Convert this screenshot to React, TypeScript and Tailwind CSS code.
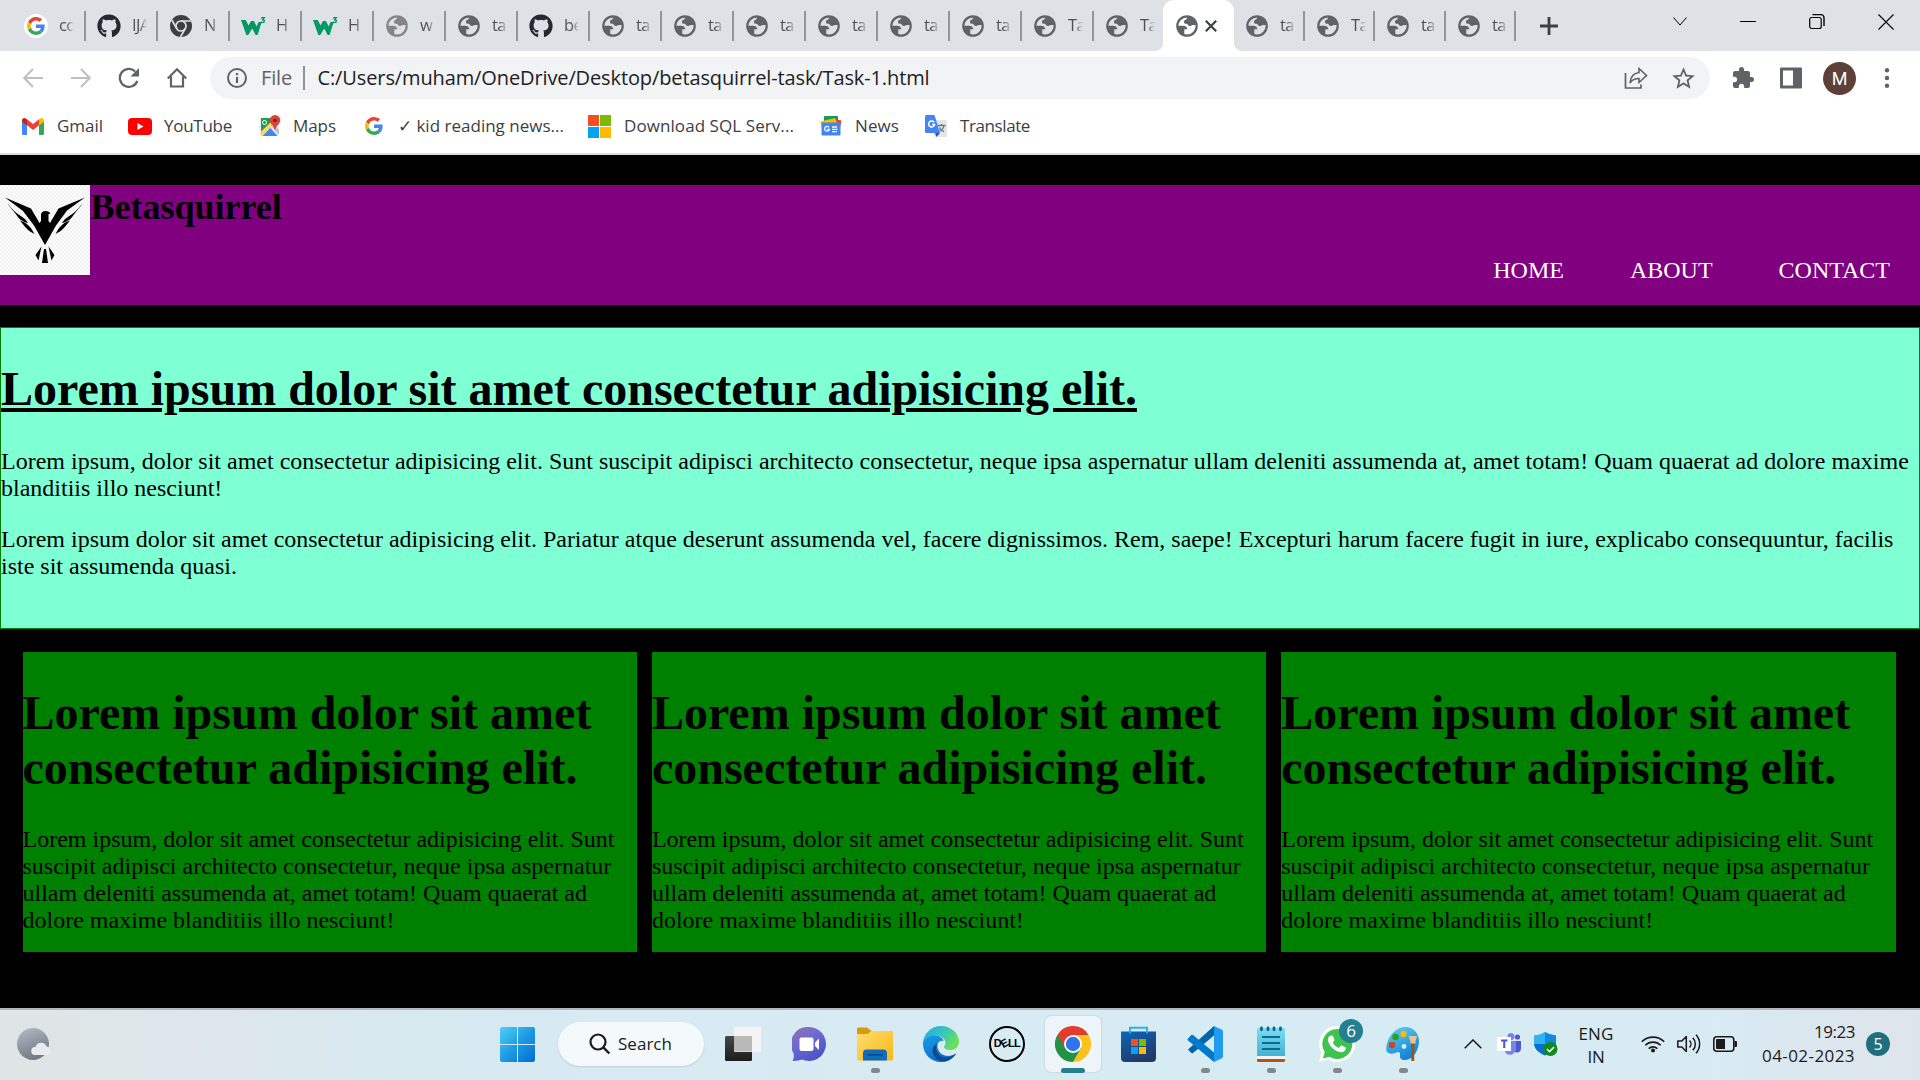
import React, { useLayoutEffect, useRef } from "react";
import { FaGithub } from "react-icons/fa";
import { MdExtension, MdStarBorder } from "react-icons/md";

/* Text whose letter spacing is adjusted so that it fills a given width. */
function Fit({ w, className = "", children }: { w: number; className?: string; children: string }) {
  const ref = useRef<HTMLSpanElement>(null);
  useLayoutEffect(() => {
    const el = ref.current;
    if (!el) return;
    el.style.letterSpacing = "0px";
    const natural = el.getBoundingClientRect().width;
    el.style.letterSpacing = `${(w - natural) / children.length}px`;
  }, [w, children]);
  return (
    <span ref={ref} className={`inline-block whitespace-pre ${className}`}>
      {children}
    </span>
  );
}

const GoogleG = ({ className = "" }) => (
  <svg viewBox="0 0 48 48" className={className}>
    <path fill="#EA4335" d="M24 9.5c3.54 0 6.71 1.22 9.21 3.6l6.85-6.85C35.9 2.38 30.47 0 24 0 14.62 0 6.51 5.38 2.56 13.22l7.98 6.19C12.43 13.72 17.74 9.5 24 9.5z" />
    <path fill="#4285F4" d="M46.98 24.55c0-1.57-.15-3.09-.38-4.55H24v9.02h12.94c-.58 2.96-2.26 5.48-4.78 7.18l7.73 6c4.51-4.18 7.09-10.36 7.09-17.65z" />
    <path fill="#FBBC05" d="M10.53 28.59c-.48-1.45-.76-2.99-.76-4.59s.27-3.14.76-4.59l-7.98-6.19C.92 16.46 0 20.12 0 24c0 3.88.92 7.54 2.56 10.78l7.97-6.19z" />
    <path fill="#34A853" d="M24 48c6.48 0 11.93-2.13 15.89-5.81l-7.73-6c-2.15 1.45-4.92 2.3-8.16 2.3-6.26 0-11.57-4.22-13.47-9.91l-7.98 6.19C6.51 42.62 14.62 48 24 48z" />
  </svg>
);

const Globe = ({ color = "#5f6368" }) => (
  <svg viewBox="0 0 22 22" className="h-[22px] w-[22px]">
    <circle cx="11" cy="11" r="9.7" fill="none" stroke={color} strokeWidth="2.2" />
    <path fill={color} d="M11 1.5c-.3 1.6.4 2-.8 2.8-1.6 1-2.3 1.5-2.3 2.8 0 1.4 1.2 1.7 2.7 1.7 1.3 0 1.4 2.3 3.2 2.3 1.5 0 1.6-1.2 3-1.2h3.7C20.5 5 16 1.2 11 1.5z" />
    <path fill={color} d="M1.5 10.8h5.6c2.7 0 4.1 1.2 4.2 3.5H8.3v5.5C4 19 1.5 15 1.5 10.8z" />
  </svg>
);

const ChromeMono = () => (
  <svg viewBox="0 0 22 22" className="h-[22px] w-[22px]">
    <circle cx="11" cy="11" r="11" fill="#3c4043" />
    <circle cx="11" cy="11" r="5" fill="none" stroke="#dee1e6" strokeWidth="1.700" />
    <path d="M11 6h9.800M6.700 13.500 1.800 5M15.300 13.500 10.500 22" stroke="#dee1e6" strokeWidth="1.600" />
  </svg>
);

const W3 = () => (
  <svg viewBox="0 0 25 20" className="h-[20px] w-[25px]">
    <path fill="#059862" d="M0 4h4.800l2.700 5.500L10 5h3l2.700 5.500L17.500 6h3.200L16.600 19h-2L11.200 12.500 7.300 19H5.300z" />
    <path fill="none" stroke="#059862" strokeWidth="1.4" d="M20.200 1.700h3l-1.500 2c1 0 1.700.5 1.700 1.400s-.7 1.500-1.700 1.500c-.8 0-1.400-.3-1.700-.8" />
  </svg>
);

type TabKind = "google" | "github" | "chrome" | "w3" | "globe" | "globeGray";
const tabs: [TabKind, string][] = [
  ["google", "co"], ["github", "IJA"], ["chrome", "N"], ["w3", "H"], ["w3", "H"], ["globeGray", "w"],
  ["globe", "ta"], ["github", "be"], ["globe", "ta"], ["globe", "ta"], ["globe", "ta"], ["globe", "ta"],
  ["globe", "ta"], ["globe", "ta"], ["globe", "Ta"], ["globe", "Ta"],
];
const tabsRight: [TabKind, string][] = [["globe", "ta"], ["globe", "Ta"], ["globe", "ta"], ["globe", "ta"]];

function TabIcon({ kind }: { kind: TabKind }) {
  if (kind === "google")
    return (
      <span className="flex h-6 w-6 items-center justify-center rounded-full bg-white">
        <GoogleG className="h-[18px] w-[18px]" />
      </span>
    );
  if (kind === "github") return <FaGithub className="h-6 w-6 text-[#24292f]" />;
  if (kind === "chrome") return <ChromeMono />;
  if (kind === "w3") return <W3 />;
  return <Globe color={kind === "globeGray" ? "#858585" : "#5f6368"} />;
}

function Tab({ kind, label, width, last }: { kind: TabKind; label: string; width: string; last?: boolean }) {
  return (
    <div className={`flex h-[30px] shrink-0 items-center ${width} ${last ? "" : "border-r-2 border-[#929599]"}`}>
      <div className="flex w-[46px] shrink-0 items-center justify-center">
        <TabIcon kind={kind} />
      </div>
      <div className="w-[15px] overflow-hidden whitespace-nowrap bg-linear-to-r from-[#4b4e52] from-50% to-[#dee1e6] bg-clip-text pb-px text-[16.5px] tracking-[-0.6px] text-transparent">
        {label}
      </div>
    </div>
  );
}

const Gmail = () => (
  <svg viewBox="0 0 22 17" className="h-[17px] w-[22px]">
    <path fill="#4285f4" d="M0 3v12.500A1.500 1.500 0 0 0 1.500 17H5V6.500z" />
    <path fill="#34a853" d="M22 3v12.500a1.500 1.500 0 0 1-1.500 1.500H17V6.500z" />
    <path fill="#ea4335" d="M5 1.200 11 6l6-4.800v6L11 12 5 7.200z" />
    <path fill="#c5221f" d="M0 2.500C0 .3 2.200-.6 3.900.6L5 1.400v6L0 3.700z" />
    <path fill="#fbbc04" d="M22 2.500C22 .3 19.800-.6 18.100.6L17 1.400v6l5-3.700z" />
  </svg>
);
const YouTube = () => (
  <svg viewBox="0 0 24 17" className="h-[17px] w-[24px]">
    <rect width="24" height="17" rx="4" fill="#f00" />
    <path fill="#fff" d="M9.500 5v7l6-3.500z" />
  </svg>
);
const Maps = () => (
  <svg viewBox="0 0 22 22" className="h-[22px] w-[22px]">
    <rect x="1" y="3" width="19" height="18" rx="1.500" fill="#eceff1" />
    <path fill="#1e9e58" d="M2.500 3H14l-2 6-10 9.500v-14C1.500 3.500 2 3 2.500 3z" />
    <path fill="#fdd663" d="M1.500 17 12 7l3 3-12 11H2z" />
    <path fill="#4285f4" d="m3.500 21 8-8 7 8z" />
    <path fill="#bdc1c6" d="m13 12 2-2 5 5v5z" />
    <circle cx="5.500" cy="7.500" r="2" fill="none" stroke="#fff" strokeWidth="1" />
    <path fill="#db4437" d="M16 0a5.300 5.300 0 0 1 5.300 5.300c0 3.500-4.200 5-5.300 10.200-1.100-5.200-5.300-6.700-5.300-10.200A5.300 5.300 0 0 1 16 0z" />
    <circle cx="16" cy="5.300" r="1.900" fill="#7b231e" />
  </svg>
);
const MsSquares = () => (
  <svg viewBox="0 0 23 23" className="h-[23px] w-[23px]">
    <path fill="#f25022" d="M0 0h11v11H0z" />
    <path fill="#7fba00" d="M12 0h11v11H12z" />
    <path fill="#00a4ef" d="M0 12h11v11H0z" />
    <path fill="#ffb900" d="M12 12h11v11H12z" />
  </svg>
);
const News = () => (
  <svg viewBox="0 0 22 20" className="h-[20px] w-[22px]">
    <rect x="4" y="0" width="14" height="8" rx="1" fill="#0f9d58" />
    <path fill="#ea4335" d="m14 3 7.500 1.500L20 12l-7-1z" />
    <path fill="#fbbc04" d="M.3 5.500 15 2l2 5L2 12z" />
    <rect x="1.500" y="6.500" width="19" height="13" rx="1.200" fill="#4285f4" />
    <path fill="none" stroke="#fff" strokeWidth="1.300" d="M9 11.300a2.400 2.400 0 1 0 .4 2H7.300M12 11h5M12 13.300h5.500M12 15.600h5" />
  </svg>
);
const Translate = () => (
  <svg viewBox="0 0 22 23" className="h-[23px] w-[22px]">
    <rect x="9" y="5" width="13" height="17" rx="1.200" fill="#e3e5e8" />
    <path fill="none" stroke="#607d8b" strokeWidth="1.300" d="M13 10.500h7.500M16.500 9v1.500M19 10.500c-.5 3-2.500 5-4.500 6M14.500 12.500c.5 1.700 2.500 3.500 4.500 4" />
    <path fill="#3949ab" d="M10 18h5l-3.500 4z" />
    <path fill="#4285f4" d="M1.500 0h8l5.500 18H1.500A1.500 1.500 0 0 1 0 16.500v-15A1.500 1.500 0 0 1 1.500 0z" />
    <path fill="none" stroke="#fff" strokeWidth="1.500" d="M9 7.200A3 3 0 1 0 9.600 9.500H7" />
  </svg>
);

const bookmarks: { icon: React.ReactNode; iconW: string; itemW: string; label: string; w: number }[] = [
  { icon: <Gmail />, iconW: "w-[35px]", itemW: "w-[106px]", label: "Gmail", w: 46 },
  { icon: <YouTube />, iconW: "w-[36px]", itemW: "w-[131px]", label: "YouTube", w: 68 },
  { icon: <Maps />, iconW: "w-[34px]", itemW: "w-[106px]", label: "Maps", w: 43 },
  { icon: <GoogleG className="h-[18px] w-[18px]" />, iconW: "w-[33px]", itemW: "w-[223px]", label: "✓ kid reading news...", w: 166 },
  { icon: <MsSquares />, iconW: "w-[36px]", itemW: "w-[232px]", label: "Download SQL Serv...", w: 170 },
  { icon: <News />, iconW: "w-[35px]", itemW: "w-[105px]", label: "News", w: 44 },
  { icon: <Translate />, iconW: "w-[35px]", itemW: "w-[130px]", label: "Translate", w: 70 },
];

function Browser() {
  return (
    <header className="h-[155px] border-b-2 border-[#dadce0] bg-white text-[17px] text-[#3c4043]">
      <div className="flex h-[51px] bg-[#dee1e6] pl-[13px]">
        <div className="flex h-[51px] items-center pt-px">
          {tabs.map(([k, l], i) => (
            <Tab key={i} kind={k} label={l} last={i === tabs.length - 1} width={i === 0 ? "w-[73px]" : i === tabs.length - 1 ? "w-[61px]" : "w-[72px]"} />
          ))}
        </div>
        <div className="flex h-[51px] w-[87px] items-end">
          <div className="h-2 w-2 bg-white">
            <div className="h-2 w-2 rounded-br-lg bg-[#dee1e6]" />
          </div>
          <div className="flex h-[51px] w-[71px] items-center gap-[7px] rounded-t-[11px] bg-white pl-[13px] pt-px">
            <Globe />
            <svg viewBox="0 0 12 12" className="h-3 w-3">
              <path d="M.8.800 11.200 11.200M11.200.800.800 11.200" stroke="#3c4043" strokeWidth="2.200" />
            </svg>
          </div>
          <div className="h-2 w-2 bg-white">
            <div className="h-2 w-2 rounded-bl-lg bg-[#dee1e6]" />
          </div>
        </div>
        <div className="-ml-[8px] flex h-[51px] items-center pt-px">
          {tabsRight.map(([k, l], i) => (
            <Tab key={i} kind={k} label={l} width={i === 0 || i === 2 ? "w-[71px]" : "w-[70px]"} />
          ))}
        </div>
        <svg viewBox="0 0 18 18" className="ml-[24px] mt-[17px] h-[18px] w-[18px]">
          <path d="M9 0v18M0 9h18" stroke="#3c4043" strokeWidth="2.800" />
        </svg>
        <div className="ml-auto mr-[26px] mt-[13px] flex h-[18px] items-center text-black">
          <svg viewBox="0 0 16 18" className="mr-[52px] h-[18px] w-4">
            <path d="m1.500 4.500 6.500 7.500 6.500-7.500" fill="none" stroke="currentColor" strokeWidth="1" />
          </svg>
          <svg viewBox="0 0 16 18" className="mr-[53px] h-[18px] w-4">
            <path d="M0 8.500h16" stroke="currentColor" strokeWidth="1" />
          </svg>
          <svg viewBox="0 0 16 18" className="mr-[53px] h-[18px] w-4">
            <rect x=".7" y="4.500" width="11.500" height="11" rx="2" fill="none" stroke="currentColor" strokeWidth="1.200" />
            <path d="M3.500 1.600h8.500a3 3 0 0 1 3 3v8.500" fill="none" stroke="currentColor" strokeWidth="1.400" />
          </svg>
          <svg viewBox="0 0 16 18" className="h-[18px] w-4">
            <path d="m.5 1.500 15 15M15.500 1.500l-15 15" stroke="currentColor" strokeWidth="1.100" />
          </svg>
        </div>
      </div>

      <div className="flex h-[54px] items-center pl-[23px]">
        <svg viewBox="0 0 20 20" className="h-5 w-5">
          <path d="M20 10H1.500M10 1 1.200 10 10 19" fill="none" stroke="#bdbfc1" strokeWidth="2" />
        </svg>
        <svg viewBox="0 0 20 20" className="ml-[28px] h-5 w-5">
          <path d="M0 10h18.500M10 1l8.800 9L10 19" fill="none" stroke="#bdbfc1" strokeWidth="2" />
        </svg>
        <svg viewBox="0 0 22 22" className="ml-[27px] h-[22px] w-[22px]">
          <path d="M19.300 14A9 9 0 1 1 17.200 4.500" fill="none" stroke="#5f6368" strokeWidth="2.200" />
          <path d="M21 1v8.500h-8.500z" fill="#5f6368" />
        </svg>
        <svg viewBox="0 0 20 20" className="ml-[27px] h-5 w-5">
          <path d="M.7 10.500 10 1.300l9.300 9.200M4 8.500v10h12v-10" fill="none" stroke="#5f6368" strokeWidth="2.200" />
        </svg>
        <div className="ml-[23px] flex h-[42px] w-[1500px] items-center rounded-full bg-[#f1f3f4] pl-[17px] text-[20px]">
          <svg viewBox="0 0 20 20" className="h-5 w-5">
            <circle cx="10" cy="10" r="9" fill="none" stroke="#5f6368" strokeWidth="2" />
            <path d="M10 9v6M10 5v2.200" stroke="#5f6368" strokeWidth="2.200" />
          </svg>
          <Fit w={31} className="ml-[14px] text-[#5f6368]">File</Fit>
          <span className="ml-[11px] mr-[13px] h-6 w-[1.5px] bg-[#8f9296]" />
          <Fit w={612} className="text-[#202124]">C:/Users/muham/OneDrive/Desktop/betasquirrel-task/Task-1.html</Fit>
          <svg viewBox="0 0 24 22" className="ml-auto h-[22px] w-6">
            <path d="M1.500 6v15h15.500v-3.500" fill="none" stroke="#5f6368" strokeWidth="1.700" />
            <path d="M15 5.500V1.500l7.500 7-7.500 7v-4c-4 0-7 1.200-9 4.500.4-5.500 3.500-9.800 9-10.500z" fill="none" stroke="#5f6368" strokeWidth="1.600" />
          </svg>
          <MdStarBorder className="ml-[22px] mr-[13px] h-[27px] w-[27px] text-[#5f6368]" />
        </div>
        <MdExtension className="ml-[21px] h-6 w-6 text-[#5f6368]" />
        <svg viewBox="0 0 22 22" className="ml-[25px] h-[22px] w-[22px]">
          <rect width="22" height="21" y=".5" rx="1" fill="#5f6368" />
          <path fill="#fff" d="M3 3.500h10v15H3z" />
        </svg>
        <span className="ml-[21px] flex h-[33px] w-[33px] items-center justify-center rounded-full bg-[#5d4037] font-[Roboto] text-[18px] text-white">M</span>
        <svg viewBox="0 0 6 22" className="ml-[28px] h-[22px] w-[6px]">
          <circle cx="3" cy="3.200" r="2.200" fill="#5f6368" />
          <circle cx="3" cy="11" r="2.200" fill="#5f6368" />
          <circle cx="3" cy="18.800" r="2.200" fill="#5f6368" />
        </svg>
      </div>

      <div className="flex h-[42px] items-center pl-[22px]">
        {bookmarks.map((b) => (
          <div key={b.label} className={`flex shrink-0 items-center ${b.itemW}`}>
            <span className={`shrink-0 ${b.iconW}`}>{b.icon}</span>
            <Fit w={b.w}>{b.label}</Fit>
          </div>
        ))}
      </div>
    </header>
  );
}

const Eagle = () => (
  <svg viewBox="0 0 90 90" className="h-[90px] w-[90px] shrink-0">
    <defs>
      <pattern id="check" width="4" height="4" patternUnits="userSpaceOnUse">
        <rect width="4" height="4" fill="#fdfdfd" />
        <path fill="#f1f1f1" d="M0 0h2v2H0zM2 2h2v2H2z" />
      </pattern>
    </defs>
    <rect width="90" height="90" fill="url(#check)" />
    <path d="M5 12.500 31 23.500l8.500 14.500 1.500-2V30c0-2.500 2-4 4.500-4 2 0 3.500.7 5 2.500l-2 .5v7l1.500 2L58.500 23.500 85 12.500 67 25.500 56 40.500 45 60 34 40.500 23 26z" />
    <path d="M7.500 18c4 6 9 10.500 14 13.500 3 2 5 4 6.500 6.500-6-1.500-9-4-11.500-8C13 25.500 9.500 22 7.500 18zM82.500 18c-4 6-9 10.500-14 13.500-3 2-5 4-6.500 6.500 6-1.500 9-4 11.500-8 3.500-4.500 7-8 9-12zM20 35.500c5 1.500 10 4.500 14.500 13.500-6-3-9-6-14.500-13.500zM70 35.500c-5 1.500-10 4.500-14.500 13.500 6-3 9-6 14.500-13.500z" />
    <path d="M41.500 61.500 38.500 75.500l-3-5.500zM48.500 61.500l3 14 3-5.500zM44 64h2l2 14h-6z" />
  </svg>
);

const para1 =
  "Lorem ipsum, dolor sit amet consectetur adipisicing elit. Sunt suscipit adipisci architecto consectetur, neque ipsa aspernatur ullam deleniti assumenda at, amet totam! Quam quaerat ad dolore maxime blanditiis illo nesciunt!";
const para2 =
  "Lorem ipsum dolor sit amet consectetur adipisicing elit. Pariatur atque deserunt assumenda vel, facere dignissimos. Rem, saepe! Excepturi harum facere fugit in iure, explicabo consequuntur, facilis iste sit assumenda quasi.";
const heading = "Lorem ipsum dolor sit amet consectetur adipisicing elit.";

function Page() {
  return (
    <main className="h-[853px] overflow-hidden bg-black pt-[30px] font-['Liberation_Serif',serif] text-[24px] leading-[27px] text-black">
      <div className="flex h-[120px] bg-[#800080]">
        <Eagle />
        <h2 className="pl-[0.5px] pt-px text-[36px] font-bold leading-[42px]">Betasquirrel</h2>
        <nav className="ml-auto flex gap-[66px] pr-[30px] pt-[72px] text-white">
          <a>HOME</a>
          <a>ABOUT</a>
          <a>CONTACT</a>
        </nav>
      </div>
      <section className="mt-[22px] h-[302px] border border-[#008000] bg-[#7fffd4] pt-[33px]">
        <h1 className="text-[48px] font-bold leading-[55px] underline">{heading}</h1>
        <p className="mt-[32px]">{para1}</p>
        <p className="mt-[24px]">{para2}</p>
      </section>
      <div className="mt-[23px] flex gap-[15px] pl-[22.5px]">
        {[0, 1, 2].map((i) => (
          <article key={i} className="h-[300px] w-[614.4px] shrink-0 bg-[#008000] pt-[33px]">
            <h1 className="text-[48px] font-bold leading-[55px]">{heading}</h1>
            <p className="mt-[31px]">{para1}</p>
          </article>
        ))}
      </div>
    </main>
  );
}

const Edge = () => (
  <svg viewBox="0 0 36 36" className="h-9 w-9">
    <defs>
      <linearGradient id="e1" x1="0" y1="0" x2="1" y2=".5">
        <stop offset="0" stopColor="#2aa5e6" />
        <stop offset=".55" stopColor="#35c6c0" />
        <stop offset="1" stopColor="#6be05a" />
      </linearGradient>
      <linearGradient id="e2" x1="0" y1="0" x2=".6" y2="1">
        <stop offset="0" stopColor="#1aa0e8" />
        <stop offset="1" stopColor="#0669c8" />
      </linearGradient>
    </defs>
    <path fill="url(#e2)" d="M0 18C0 11 6 8.500 11 9c6 .5 9.500 4 9.500 6-4-1.500-6.500 2-6 6 .6 5 5 9 10.500 9 3 0 5.500-1 8-2.500C30 33 24.500 36 18 36 8 36 0 28 0 18z" />
    <path fill="#114a8b" d="M14.300 17.500c-2 3.500-1 9 2.500 12 4 3.500 10 3 16.500-2.300-2.500 4-6.500 7.300-11.500 8.400-7 .4-12.300-5-12.300-11 0-3 1.800-6 4.800-7.100z" />
    <path fill="url(#e1)" d="M0 17C.5 7.500 8.500 0 18 0s18 7 18 15.500c0 5-3.500 8.500-8.500 8.500-4 0-6.500-1.500-6.500-3 0-1 1.500-1.500 1.500-4 0-3.500-4-7.500-10-7.500C6 9.500 1.500 12.500 0 17z" />
  </svg>
);

const Chrome = () => (
  <svg viewBox="0 0 36 36" className="h-9 w-9">
    <path fill="#fcc21b" d="M18 9h15.600A18 18 0 0 1 18 36l7.800-13.500z" />
    <path fill="#229342" d="M2.400 9a18 18 0 0 0 15.600 27l7.800-13.500L18 18z" />
    <path fill="#e33b2e" d="M33.600 9A18 18 0 0 0 2.400 9l7.800 13.500L18 9z" />
    <circle cx="18" cy="18" r="9" fill="#fff" />
    <circle cx="18" cy="18" r="7.200" fill="#2f74ea" />
  </svg>
);

const VSCode = () => (
  <svg viewBox="0 0 36 36" className="h-9 w-9">
    <path fill="#0065a9" d="m1 23.500 3 3.300c.6.500 1.300.5 2 .1L27 9.500V0z" />
    <path fill="#007acc" d="m1 12.500 3-3.300c.6-.5 1.300-.5 2-.1L27 26.500V36L1 14.500c-.6-.6-.6-1.400 0-2z" />
    <path fill="#1f9cf0" d="m27 0 7.500 3.500c1 .4 1.500 1.200 1.500 2.200v24.600c0 1-.5 1.800-1.500 2.200L27 36z" />
  </svg>
);

const Paint = () => (
  <svg viewBox="0 0 36 36" className="h-9 w-9">
    <defs>
      <linearGradient id="pt" x1="0" y1="0" x2=".5" y2="1">
        <stop offset="0" stopColor="#5fd4f5" />
        <stop offset="1" stopColor="#1583d8" />
      </linearGradient>
    </defs>
    <path fill="url(#pt)" d="M20 1c8 0 14 6 14 14 0 9-6 19-14 19-4 0-5.500-2-5-5 .3-2.500-1-3.500-3.500-2.500C7 28.500 3 28 1.500 25 0 16 8 1 20 1z" />
    <circle cx="10.500" cy="11" r="3.200" fill="#2f9e1a" />
    <circle cx="18.500" cy="8" r="3.200" fill="#fdb90c" />
    <circle cx="7" cy="19" r="3.200" fill="#d0451b" />
    <circle cx="19" cy="20.500" r="2.400" fill="#d9ecf5" />
    <path fill="#9a5a17" d="M26 16h3.500l-.3 19h-2.900z" />
    <path fill="#e8c48e" d="M23.500 10h8.500l-1.500 5.500v2h-5v-2z" />
  </svg>
);

const apps: { name: string; dot?: boolean; icon: React.ReactNode }[] = [
  {
    name: "tasks",
    icon: (
      <svg viewBox="0 0 36 34" className="h-[34px] w-9">
        <defs>
          <linearGradient id="tv" x1="0" y1="0" x2="0" y2="1">
            <stop offset="0" stopColor="#484848" />
            <stop offset="1" stopColor="#1c1c1c" />
          </linearGradient>
        </defs>
        <rect y="9" width="27" height="25" rx="1.500" fill="url(#tv)" />
        <rect x="9" width="27" height="25" rx="1" fill="#f4f4f4" />
        <path fill="#b9b9b9" d="M9 9h18v15.500H9z" />
      </svg>
    ),
  },
  {
    name: "chat",
    icon: (
      <svg viewBox="0 0 34 34" className="h-[34px] w-[34px]">
        <defs>
          <linearGradient id="ch" x1="0" y1="0" x2=".6" y2="1">
            <stop offset="0" stopColor="#9a6bb0" />
            <stop offset=".45" stopColor="#6e6cd0" />
            <stop offset="1" stopColor="#4f52c8" />
          </linearGradient>
        </defs>
        <path fill="url(#ch)" d="M17 0a17 17 0 1 1-7 32.500c-2.500 1-6 1.600-9.500 1.500 1.500-2.500 1.500-5 1-8A17 17 0 0 1 17 0z" />
        <rect x="7.500" y="10.500" width="14" height="13.500" rx="2" fill="#fff" />
        <path fill="#fff" d="M23 15.500 27 11.500v11.500l-4-4z" />
      </svg>
    ),
  },
  {
    name: "files",
    dot: true,
    icon: (
      <svg viewBox="0 0 36 34" className="h-[34px] w-9">
        <defs>
          <linearGradient id="fo" x1="0" y1="0" x2="1" y2="1">
            <stop offset="0" stopColor="#ffdc73" />
            <stop offset="1" stopColor="#f9b912" />
          </linearGradient>
        </defs>
        <path fill="#d99b0a" d="M0 2a1.500 1.500 0 0 1 1.500-1.500H10l4.500 3.500H35v6H0z" />
        <path fill="url(#fo)" d="M0 7h10.500l4-3H34.500A1.500 1.500 0 0 1 36 5.500v27a1 1 0 0 1-1 1H1a1 1 0 0 1-1-1z" />
        <path fill="#0f6cbd" d="M6 33.500V26a3.500 3.500 0 0 1 3.500-3.500h17A3.500 3.500 0 0 1 30 26v7.500z" />
        <path stroke="#0b4a8a" strokeWidth="1.800" strokeLinecap="round" d="M11 27.800h14" />
      </svg>
    ),
  },
  { name: "edge", icon: <Edge /> },
  {
    name: "dell",
    icon: (
      <span className="flex h-9 w-9 items-center justify-center rounded-full border-2 border-black pb-px font-['Liberation_Sans',sans-serif] text-[11px] font-bold tracking-[-0.6px] text-black">
        D<span className="-rotate-[30deg]">E</span>LL
      </span>
    ),
  },
  { name: "chrome", icon: <Chrome /> },
  {
    name: "store",
    icon: (
      <svg viewBox="0 0 35 36" className="mr-px h-9 w-[35px]">
        <defs>
          <linearGradient id="st" x1="0" y1="0" x2=".5" y2="1">
            <stop offset="0" stopColor="#0b66bd" />
            <stop offset="1" stopColor="#233a68" />
          </linearGradient>
        </defs>
        <path d="M9 8V1.800h17V8" fill="none" stroke="#27b3f2" strokeWidth="2" />
        <path fill="url(#st)" d="M0 5.500h35V32a4 4 0 0 1-4 4H4a4 4 0 0 1-4-4z" />
        <path d="M9 5v2.300M26 5v2.300" stroke="#27b3f2" strokeWidth="2" />
        <path fill="#f25022" d="M10 13h7v7h-7z" />
        <path fill="#7fba00" d="M18 13h7v7h-7z" />
        <path fill="#00a4ef" d="M10 21h7v7h-7z" />
        <path fill="#ffb900" d="M18 21h7v7h-7z" />
      </svg>
    ),
  },
  { name: "code", dot: true, icon: <VSCode /> },
  {
    name: "notepad",
    dot: true,
    icon: (
      <svg viewBox="0 0 28 36" className="h-9 w-7">
        <defs>
          <linearGradient id="np" x1="0" y1="0" x2="0" y2="1">
            <stop offset="0" stopColor="#7fdcf0" />
            <stop offset="1" stopColor="#41b2d3" />
          </linearGradient>
        </defs>
        <path fill="#b4530b" d="M0 30h28v4.500a1.500 1.500 0 0 1-1.500 1.500h-25A1.500 1.500 0 0 1 0 34.500z" />
        <path fill="#f3f3f3" d="M0 28h28v5H0z" />
        <path fill="url(#np)" d="M1.500 2h25A1.500 1.500 0 0 1 28 3.500V30H0V3.500A1.500 1.500 0 0 1 1.500 2z" />
        <path stroke="#0b6a93" strokeWidth="2.800" strokeLinecap="round" d="M4.500 1.800v2M11 1.800v2M17 1.800v2M23.500 1.800v2" />
        <path stroke="#0b6a93" strokeWidth="1.800" d="M5 11h18M5 17h18M5 23h18" />
      </svg>
    ),
  },
  {
    name: "whatsapp",
    dot: true,
    icon: (
      <span className="relative flex h-9 w-9 items-center justify-center">
        <svg viewBox="0 0 36 36" className="h-9 w-9">
          <path fill="#fff" d="M18 0a18 18 0 1 1-8.500 33.800L0 36l2.300-9.300A18 18 0 0 1 18 0z" />
          <path fill="#3fc350" d="M18.200 3a15 15 0 1 1-7.700 27.800L4 32.500l1.700-6.500A15 15 0 0 1 18.200 3z" />
          <path fill="#fff" d="M12.500 9.500c.8 0 1.200 0 1.600.9l1.300 3.200c.2.600 0 1-.4 1.500l-1.200 1.400c1.200 2.300 3.300 4.300 6 5.400l1.700-2c.4-.5.800-.5 1.400-.3l3.200 1.600c.7.3.8.6.7 1.400-.3 2.300-2.300 3.800-4.500 3.600-6.500-.6-12-6-13.200-11.500-.5-2.300.9-5.200 3.400-5.200z" />
        </svg>
        <span className="absolute -top-[7px] left-[20px] flex h-6 w-6 items-center justify-center rounded-full bg-[#248091] text-[17px] text-white">6</span>
      </span>
    ),
  },
  { name: "paint", dot: true, icon: <Paint /> },
];

function Taskbar() {
  return (
    <footer className="flex h-[72px] border-t-2 border-[#b1b7bc] bg-[linear-gradient(90deg,#dfe4e4_0px,#dee6ec_200px,#d5e9ef_420px,#d8eaf3_600px,#d7ebf2_1000px,#d8ebf3_1700px,#dfe4ec_1920px)] text-[17px] text-[#1b1b1b]">
      <svg viewBox="0 0 34 34" className="ml-[17px] mt-[17px] h-[34px] w-[34px]">
        <defs>
          <linearGradient id="mo" x1="0" y1="0" x2=".4" y2="1">
            <stop offset="0" stopColor="#b2bec9" />
            <stop offset="1" stopColor="#767a84" />
          </linearGradient>
        </defs>
        <circle cx="16" cy="17" r="16" fill="url(#mo)" />
        <path fill="#e8ebef" d="M18 28a4 4 0 0 1 .5-8 5.800 5.800 0 0 1 11-.5 4.300 4.300 0 0 1 .5 8.500z" />
      </svg>
      <svg viewBox="0 0 35 35" className="ml-[449px] mt-[17px] h-[35px] w-[35px]">
        <defs>
          <linearGradient id="win" gradientUnits="userSpaceOnUse" x1="0" y1="0" x2="35" y2="35">
            <stop offset="0" stopColor="#4dd0fb" />
            <stop offset=".5" stopColor="#1f9ae4" />
            <stop offset="1" stopColor="#006fd0" />
          </linearGradient>
        </defs>
        <path fill="url(#win)" d="M1.500 0H17v17H0V1.500zM18 0h15.500L35 1.500V17H18zM0 18h17v17H1.500L0 33.500zM18 18h17v15.500L33.500 35H18z" />
      </svg>
      <div className="ml-[23px] mt-[12px] flex h-11 w-[146px] items-center rounded-full bg-[#f4f9fc] pl-[31px] shadow-[0_1px_2px_rgba(0,0,0,0.12)]">
        <svg viewBox="0 0 22 22" className="mr-[7px] h-[22px] w-[22px]">
          <circle cx="9" cy="9" r="7.500" fill="none" stroke="#1b1b1b" strokeWidth="2.200" />
          <path d="m14.300 14.300 6 6.200" stroke="#1b1b1b" strokeWidth="2.400" />
        </svg>
        <Fit w={54}>Search</Fit>
      </div>
      <div className="ml-[6px] flex">
        {apps.map((a) => (
          <div key={a.name} className="flex w-[66px] flex-col items-center pt-[6px]">
            <div className={`flex h-14 w-14 items-center justify-center rounded-md ${a.name === "chrome" ? "bg-[#edf4fa] shadow-[0_0_2px_rgba(0,0,0,0.2)]" : ""}`}>{a.icon}</div>
            {a.dot && <span className="-mt-[4px] h-[5px] w-[9px] rounded-full bg-[#80888c]" />}
            {a.name === "chrome" && <span className="-mt-[4px] h-[5px] w-6 rounded-full bg-[#248091]" />}
          </div>
        ))}
      </div>
      <div className="ml-[28px] flex h-[68px] items-center">
        <svg viewBox="0 0 18 10" className="h-[10px] w-[18px]">
          <path d="m.7 9.300 8.300-8.300 8.300 8.300" fill="none" stroke="#1b1b1b" strokeWidth="1.500" />
        </svg>
        <svg viewBox="0 0 24 22" className="ml-[15px] h-[22px] w-6">
          <circle cx="14" cy="3.500" r="3.500" fill="#7b83eb" />
          <circle cx="20.500" cy="4" r="2.600" fill="#5059c9" />
          <path fill="#5059c9" d="M16 8h8v7.500c0 2.500-2 4-4 4s-3-1-4-3z" />
          <path fill="#7b83eb" d="M9 8h10v7.500a6.300 6.300 0 0 1-6.300 6.300c-2.200 0-4-1.300-4.700-3z" />
          <rect y="4" width="14" height="14" fill="#fff" />
          <path fill="#5059c9" d="M4 6.500h6.500v2H8.300v6.500H6.200V8.500H4z" />
        </svg>
        <svg viewBox="0 0 24 24" className="ml-[13px] h-6 w-6">
          <path fill="#2fb4ef" d="M11 0c3 2 7 3.200 11 3.200V12H0V3.200C4 3.200 8 2 11 0z" />
          <path fill="#0d6fcf" d="M0 12h22c-.5 5-4.500 9-11 11.500C4.500 21 .5 17 0 12z" />
          <path fill="#1489dc" d="M11 0c3 2 7 3.200 11 3.200V12H11z" />
          <circle cx="16.500" cy="17" r="7" fill="#0f8a1c" />
          <path d="m13 17 2.500 2.600 4.500-4.500" fill="none" stroke="#fff" strokeWidth="1.500" />
        </svg>
        <div className="ml-[20px] mt-[2px] flex w-[36px] flex-col items-center leading-[23px]">
          <Fit w={35}>ENG</Fit>
          <Fit w={17}>IN</Fit>
        </div>
        <svg viewBox="0 0 24 18" className="ml-[27px] h-[18px] w-6">
          <path d="M.8 6.800a15.800 15.800 0 0 1 22.400 0M4.300 10.300a10.900 10.900 0 0 1 15.400 0M7.700 13.600a6.100 6.100 0 0 1 8.600 0" fill="none" stroke="#1b1b1b" strokeWidth="1.600" />
          <circle cx="12" cy="15.500" r="2" fill="#1b1b1b" />
        </svg>
        <svg viewBox="0 0 24 20" className="ml-[12px] h-5 w-6">
          <path d="M.8 7h4l4.500-4.500v15L4.800 13h-4z" fill="none" stroke="#1b1b1b" strokeWidth="1.500" strokeLinejoin="round" />
          <path d="M12.500 6.500a5 5 0 0 1 0 7M15.800 3.700a9 9 0 0 1 0 12.600M19 .8a13.500 13.500 0 0 1 0 18.400" fill="none" stroke="#1b1b1b" strokeWidth="1.500" />
        </svg>
        <svg viewBox="0 0 24 16" className="ml-[12px] h-4 w-6">
          <rect x=".8" y=".8" width="20" height="14.400" rx="3" fill="none" stroke="#1b1b1b" strokeWidth="1.600" />
          <path d="M21.500 5H23a1 1 0 0 1 1 1v4a1 1 0 0 1-1 1h-1.500zM3 4a1 1 0 0 1 1-1h8v10H4a1 1 0 0 1-1-1z" fill="#1b1b1b" />
        </svg>
        <div className="flex w-[118px] flex-col items-end leading-[24px]">
          <Fit w={41}>19:23</Fit>
          <Fit w={93}>04-02-2023</Fit>
        </div>
        <span className="ml-[11px] flex h-6 w-6 items-center justify-center rounded-full bg-[#1f6f7c] text-[16px] text-white">5</span>
      </div>
    </footer>
  );
}

export default function App() {
  return (
    <div className="h-[1080px] w-[1920px] overflow-hidden bg-black font-['Open_Sans','Noto_Sans',sans-serif]">
      <Browser />
      <Page />
      <Taskbar />
    </div>
  );
}
